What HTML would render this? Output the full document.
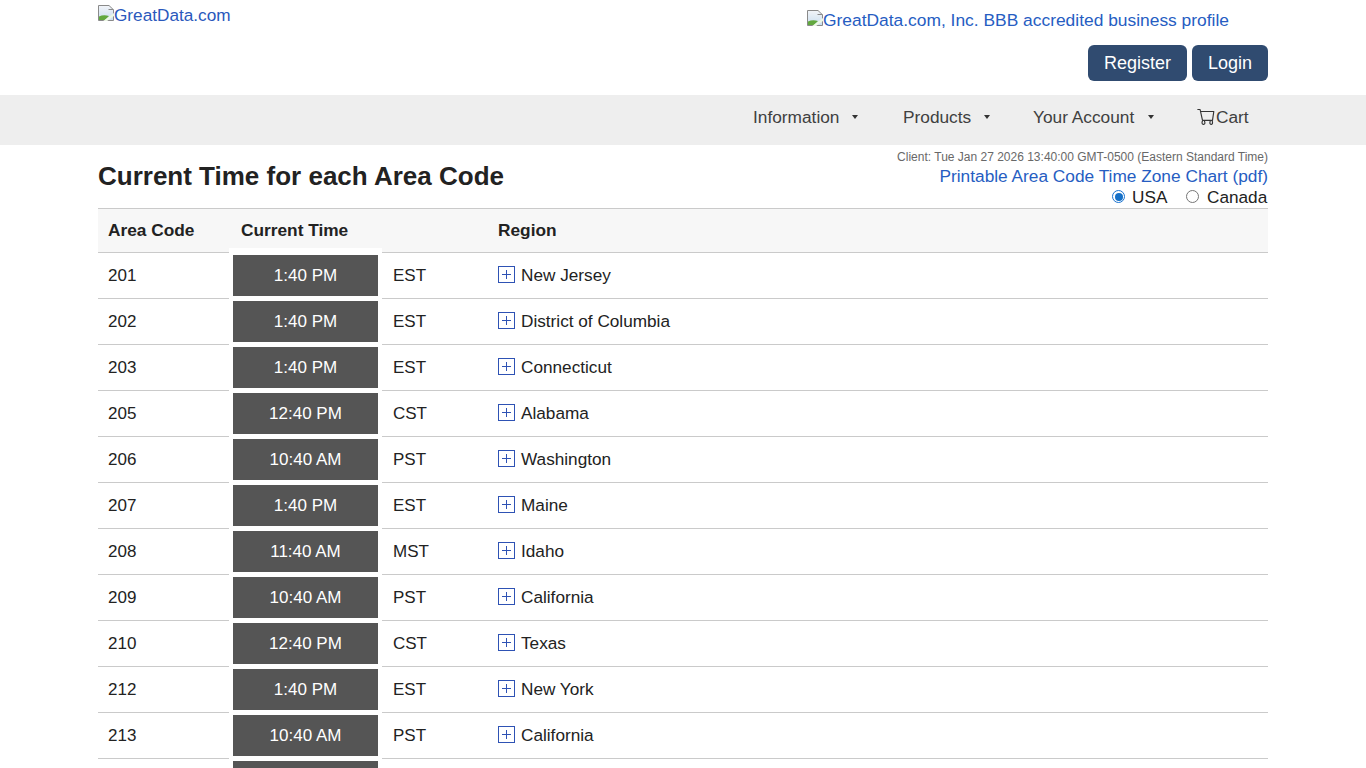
<!DOCTYPE html>
<html><head><meta charset="utf-8">
<style>
*{box-sizing:border-box;margin:0;padding:0}
html,body{width:1366px;height:768px;overflow:hidden;background:#fff}
body{font-family:"Liberation Sans",sans-serif;color:#222;position:relative}
.abs{position:absolute;white-space:nowrap}
.lnk{color:#265dc2}
.lnk2{color:#2a58bc}
.radio{position:absolute;width:13px;height:13px;border-radius:50%;border:1px solid #767676;background:#fff}
.radio.on{border-color:#1a73d0}
.radio.on:after{content:"";position:absolute;left:1.5px;top:1.5px;width:8px;height:8px;border-radius:50%;background:#1570c8}
.bimg{display:inline-block;width:16px;height:16px;vertical-align:top;position:relative}
.btn{position:absolute;top:45px;height:36px;background:#304b70;border-radius:6px;color:#fff;font-size:18px;line-height:36px;text-align:center}
#nav{position:absolute;left:0;top:95px;width:1366px;height:50px;background:#eeeeee}
.ni{position:absolute;top:107px;font-size:17.3px;color:#404040;line-height:20px}
.caret{position:absolute;top:115px;width:0;height:0;border-left:3px solid transparent;border-right:3px solid transparent;border-top:4px solid #333}
#tbl{position:absolute;left:98px;top:208px;width:1170px}
.hdr{position:absolute;left:0;top:0;width:1170px;height:45px;background:#f7f7f7;border-top:1px solid #cacaca;border-bottom:1px solid #cacaca}
.row{position:absolute;left:0;width:1170px;height:46px;border-bottom:1px solid #cacaca}
.c{position:absolute;font-size:17px;line-height:20px;color:#222}
.tbox{position:absolute;left:135px;width:145px;height:41px;background:#555;color:#fff;font-size:17px;line-height:41px;text-align:center}
.tcov{position:absolute;left:131px;width:153px;background:#fff}
.b{font-weight:bold}
.plus{position:absolute;width:17px;height:17px;border:1px solid #2e52b4}
.plus:before{content:"";position:absolute;left:3px;top:7px;width:9px;height:1px;background:#2e52b4}
.plus:after{content:"";position:absolute;left:7px;top:3px;width:1px;height:9px;background:#2e52b4}
</style></head><body>

<svg width="0" height="0" style="position:absolute"><defs><linearGradient id="sky" x1="0" y1="0" x2="0" y2="1"><stop offset="0" stop-color="#f2f4f8"/><stop offset="1" stop-color="#c9def0"/></linearGradient></defs></svg>
<svg class="abs" style="left:98px;top:5px" width="16" height="16" viewBox="0 0 16 16"><path d="M0.5 0.5H11L15.5 4.8V15.5H0.5Z" fill="url(#sky)" stroke="#8a8a8a"/><path d="M10.5 4.5H15.5" stroke="#8a8a8a"/><path d="M1 15V11.5Q5.5 9.2 11 11L7 15Z" fill="#62a83e"/><path d="M4.5 16.5L16.5 7.5V10.5L8.5 16.5Z" fill="#ecf8e4"/></svg>
<div class="abs lnk2" style="left:114px;top:5px;font-size:17.2px;line-height:20px">GreatData.com</div>
<svg class="abs" style="left:807px;top:10px" width="16" height="16" viewBox="0 0 16 16"><path d="M0.5 0.5H11L15.5 4.8V15.5H0.5Z" fill="url(#sky)" stroke="#8a8a8a"/><path d="M10.5 4.5H15.5" stroke="#8a8a8a"/><path d="M1 15V11.5Q5.5 9.2 11 11L7 15Z" fill="#62a83e"/><path d="M4.5 16.5L16.5 7.5V10.5L8.5 16.5Z" fill="#ecf8e4"/></svg>
<div class="abs lnk" style="left:823px;top:10px;font-size:17.4px;line-height:20px">GreatData.com, Inc. BBB accredited business profile</div>

<div class="btn" style="left:1088px;width:99px">Register</div>
<div class="btn" style="left:1192px;width:76px">Login</div>

<div id="nav"></div>
<div class="ni" style="left:753px">Information</div><div class="caret" style="left:852px"></div>
<div class="ni" style="left:903px">Products</div><div class="caret" style="left:984px"></div>
<div class="ni" style="left:1033px">Your Account</div><div class="caret" style="left:1148px"></div>
<svg class="abs" style="left:1194px;top:104px" width="24" height="24" viewBox="0 0 24 24" fill="none" stroke="#333" stroke-width="1.15" stroke-linejoin="round"><path d="M3.4 5.5H6.1L8.5 16.4H18.5L19.8 7.5H6.6"/><path d="M8.6 16.8Q7.6 18 8.2 19.6Q9.4 21 10.8 19.6Q11.2 18 10.3 16.8"/><path d="M16.4 16.8Q15.6 18 16.0 19.6Q17.2 21 18.4 19.6Q18.8 18 18.1 16.8"/></svg>
<div class="ni" style="left:1216px">Cart</div>

<div class="abs" style="left:98px;top:161px;font-size:26px;font-weight:bold;line-height:30px;color:#222">Current Time for each Area Code</div>
<div class="abs" style="right:98px;top:150px;font-size:12px;line-height:14px;color:#686868">Client: Tue Jan 27 2026 13:40:00 GMT-0500 (Eastern Standard Time)</div>
<div class="abs lnk" style="right:98px;top:166px;font-size:17.3px;line-height:20px">Printable Area Code Time Zone Chart (pdf)</div>
<div class="radio on" style="left:1112px;top:190px"></div>
<div class="abs" style="left:1132px;top:187px;font-size:17.2px;line-height:20px;color:#222">USA</div>
<div class="radio" style="left:1186px;top:190px"></div>
<div class="abs" style="left:1207px;top:187px;font-size:17.2px;line-height:20px;color:#222">Canada</div>

<div id="tbl">
<div class="hdr"></div>
<div class="tcov" style="top:40px;height:7px"></div>
<div class="c b" style="left:10px;top:12px;font-size:17.3px">Area Code</div>
<div class="c b" style="left:143px;top:12px;font-size:17.3px">Current Time</div>
<div class="c b" style="left:400px;top:12px;font-size:17.3px">Region</div>
<div class="row" style="top:45px"></div>
<div class="tcov" style="top:42px;height:5px"></div>
<div class="tbox" style="top:47px">1:40 PM</div>
<div class="c" style="left:10px;top:58px">201</div>
<div class="c" style="left:295px;top:58px">EST</div>
<div class="plus" style="left:400px;top:58px"></div>
<div class="c" style="left:423px;top:57px;font-size:17.2px">New Jersey</div>
<div class="row" style="top:91px"></div>
<div class="tcov" style="top:88px;height:5px"></div>
<div class="tbox" style="top:93px">1:40 PM</div>
<div class="c" style="left:10px;top:104px">202</div>
<div class="c" style="left:295px;top:104px">EST</div>
<div class="plus" style="left:400px;top:104px"></div>
<div class="c" style="left:423px;top:103px;font-size:17.2px">District of Columbia</div>
<div class="row" style="top:137px"></div>
<div class="tcov" style="top:134px;height:5px"></div>
<div class="tbox" style="top:139px">1:40 PM</div>
<div class="c" style="left:10px;top:150px">203</div>
<div class="c" style="left:295px;top:150px">EST</div>
<div class="plus" style="left:400px;top:150px"></div>
<div class="c" style="left:423px;top:149px;font-size:17.2px">Connecticut</div>
<div class="row" style="top:183px"></div>
<div class="tcov" style="top:180px;height:5px"></div>
<div class="tbox" style="top:185px">12:40 PM</div>
<div class="c" style="left:10px;top:196px">205</div>
<div class="c" style="left:295px;top:196px">CST</div>
<div class="plus" style="left:400px;top:196px"></div>
<div class="c" style="left:423px;top:195px;font-size:17.2px">Alabama</div>
<div class="row" style="top:229px"></div>
<div class="tcov" style="top:226px;height:5px"></div>
<div class="tbox" style="top:231px">10:40 AM</div>
<div class="c" style="left:10px;top:242px">206</div>
<div class="c" style="left:295px;top:242px">PST</div>
<div class="plus" style="left:400px;top:242px"></div>
<div class="c" style="left:423px;top:241px;font-size:17.2px">Washington</div>
<div class="row" style="top:275px"></div>
<div class="tcov" style="top:272px;height:5px"></div>
<div class="tbox" style="top:277px">1:40 PM</div>
<div class="c" style="left:10px;top:288px">207</div>
<div class="c" style="left:295px;top:288px">EST</div>
<div class="plus" style="left:400px;top:288px"></div>
<div class="c" style="left:423px;top:287px;font-size:17.2px">Maine</div>
<div class="row" style="top:321px"></div>
<div class="tcov" style="top:318px;height:5px"></div>
<div class="tbox" style="top:323px">11:40 AM</div>
<div class="c" style="left:10px;top:334px">208</div>
<div class="c" style="left:295px;top:334px">MST</div>
<div class="plus" style="left:400px;top:334px"></div>
<div class="c" style="left:423px;top:333px;font-size:17.2px">Idaho</div>
<div class="row" style="top:367px"></div>
<div class="tcov" style="top:364px;height:5px"></div>
<div class="tbox" style="top:369px">10:40 AM</div>
<div class="c" style="left:10px;top:380px">209</div>
<div class="c" style="left:295px;top:380px">PST</div>
<div class="plus" style="left:400px;top:380px"></div>
<div class="c" style="left:423px;top:379px;font-size:17.2px">California</div>
<div class="row" style="top:413px"></div>
<div class="tcov" style="top:410px;height:5px"></div>
<div class="tbox" style="top:415px">12:40 PM</div>
<div class="c" style="left:10px;top:426px">210</div>
<div class="c" style="left:295px;top:426px">CST</div>
<div class="plus" style="left:400px;top:426px"></div>
<div class="c" style="left:423px;top:425px;font-size:17.2px">Texas</div>
<div class="row" style="top:459px"></div>
<div class="tcov" style="top:456px;height:5px"></div>
<div class="tbox" style="top:461px">1:40 PM</div>
<div class="c" style="left:10px;top:472px">212</div>
<div class="c" style="left:295px;top:472px">EST</div>
<div class="plus" style="left:400px;top:472px"></div>
<div class="c" style="left:423px;top:471px;font-size:17.2px">New York</div>
<div class="row" style="top:505px"></div>
<div class="tcov" style="top:502px;height:5px"></div>
<div class="tbox" style="top:507px">10:40 AM</div>
<div class="c" style="left:10px;top:518px">213</div>
<div class="c" style="left:295px;top:518px">PST</div>
<div class="plus" style="left:400px;top:518px"></div>
<div class="c" style="left:423px;top:517px;font-size:17.2px">California</div>
<div class="row" style="top:551px"></div>
<div class="tcov" style="top:548px;height:5px"></div>
<div class="tbox" style="top:553px">12:40 PM</div>
<div class="c" style="left:10px;top:564px">214</div>
<div class="c" style="left:295px;top:564px">CST</div>
<div class="plus" style="left:400px;top:564px"></div>
<div class="c" style="left:423px;top:563px;font-size:17.2px">Texas</div>
</div>

</body></html>
